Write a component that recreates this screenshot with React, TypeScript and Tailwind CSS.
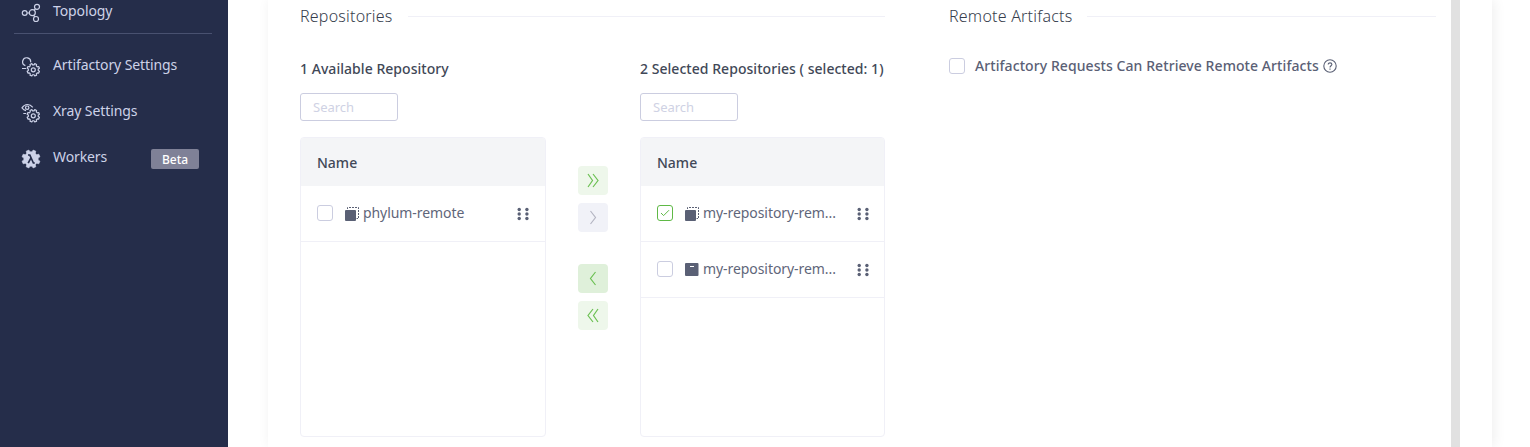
import type { ReactNode } from 'react';

function gearPath(cx: number, cy: number, outer: number, inner: number, teeth: number): string {
  const step = (Math.PI * 2) / teeth;
  const points: string[] = [];
  for (let i = 0; i < teeth; i++) {
    const a = (i + 0.5) * step - Math.PI / 2;
    const corners: [number, number][] = [
      [-0.32, inner],
      [-0.2, outer],
      [0.2, outer],
      [0.32, inner],
    ];
    for (const [offset, r] of corners) {
      const t = a + offset * step;
      points.push(`${(cx + Math.cos(t) * r).toFixed(2)} ${(cy + Math.sin(t) * r).toFixed(2)}`);
    }
  }
  return `M${points.join('L')}Z`;
}

const smallGear = gearPath(12.3, 12.8, 6.3, 5, 8);
const workerGear = gearPath(10, 10, 9.2, 7.2, 8);

function TopologyIcon() {
  return (
    <svg width="20" height="20" viewBox="0 0 20 20" fill="none" stroke="currentColor" strokeWidth="1.2">
      <circle cx="3.7" cy="10" r="2.4" />
      <circle cx="11.3" cy="9.7" r="3" />
      <circle cx="16" cy="3.8" r="2.5" />
      <circle cx="15" cy="16" r="2.5" />
      <path d="M6.2 10h2.2M13.1 7.2l1.3-1.4M12.7 12.3l1 1.5" />
    </svg>
  );
}

function ArtifactoryIcon() {
  return (
    <svg width="20" height="20" viewBox="0 0 20 20" fill="none" stroke="currentColor" strokeWidth="1.2">
      <path d="M4.4 8.6A4 4 0 1 1 9.6 5.4M1 11.5h4" />
      <path d={smallGear} strokeLinejoin="round" />
      <circle cx="12.3" cy="12.8" r="2" />
    </svg>
  );
}

function XrayIcon() {
  return (
    <svg width="20" height="20" viewBox="0 0 20 20" fill="none" stroke="currentColor" strokeWidth="1.2">
      <path d="M5 7.6C3 7 1.8 5.8 1 4.8 4 .4 8.8.6 11.8 4.4M2.3 10.5h2.8" />
      <circle cx="6.2" cy="4.7" r="1.7" />
      <path d={smallGear} strokeLinejoin="round" />
      <circle cx="12.3" cy="12.8" r="2" />
    </svg>
  );
}

function WorkersIcon() {
  return (
    <svg width="20" height="20" viewBox="0 0 20 20">
      <path d={workerGear} fill="currentColor" stroke="currentColor" strokeWidth="0.6" strokeLinejoin="round" />
      <path d="M7 6h1.8l3.6 8h1.4M10 8.8l-2.8 5.4" fill="none" stroke="#252d4a" strokeWidth="1.7" />
    </svg>
  );
}

function NavItem({ icon, label, badge }: { icon: ReactNode; label: string; badge?: string }) {
  return (
    <div className="flex h-[46px] items-center pl-[21px] pr-[29px] text-[#cdd2e8]">
      <span className="mr-3 mt-[3px] block h-5 w-5 shrink-0">{icon}</span>
      <span className="grow text-sm leading-5 tracking-[-0.1px]">{label}</span>
      {badge && (
        <span className="mt-1 flex h-5 w-12 items-center justify-center rounded-[2px] bg-[#7f8197] pt-[2px] text-xs font-medium text-white">
          {badge}
        </span>
      )}
    </div>
  );
}

function Checkbox({ checked = false }: { checked?: boolean }) {
  return (
    <span
      className={`flex h-4 w-4 shrink-0 items-center justify-center rounded-[3px] border bg-white ${
        checked ? 'border-[#5fb946]' : 'border-[#cbcde0]'
      }`}
    >
      {checked && (
        <svg width="10" height="8" viewBox="0 0 10 8" fill="none" stroke="#5fb946" strokeWidth="1">
          <path d="M1 4l2.6 2.6L9 1.2" />
        </svg>
      )}
    </span>
  );
}

function RemoteRepoIcon() {
  return (
    <svg width="14" height="14" viewBox="0 0 14 14" className="block shrink-0">
      <rect x="0" y="3" width="11" height="11" rx="1" fill="#5a6075" />
      <path d="M2.5 2V.5h11v11h-2" fill="none" stroke="#5a6075" strokeDasharray="2 1" />
    </svg>
  );
}

function LocalRepoIcon() {
  return (
    <svg width="14" height="14" viewBox="0 0 14 14" className="block shrink-0">
      <rect x="0" y="0" width="13.5" height="13" rx="1" fill="#5a6075" />
      <path d="M5 3.5h4" stroke="#fff" strokeWidth="1.2" />
    </svg>
  );
}

function DragHandle() {
  return (
    <svg width="13" height="14" viewBox="0 0 13 14" fill="#5a6075" className="block shrink-0">
      {[2.5, 7, 11.5].map((y) => (
        <g key={y}>
          <circle cx="2.2" cy={y} r="1.7" />
          <circle cx="9.9" cy={y} r="1.7" />
        </g>
      ))}
    </svg>
  );
}

type Repo = { name: string; kind: 'remote' | 'local'; checked?: boolean };

function RepoList({
  title,
  width,
  handleInset,
  repos,
}: {
  title: string;
  width: string;
  handleInset: string;
  repos: Repo[];
}) {
  return (
    <div className={`${width} shrink-0`}>
      <div className="h-5 whitespace-nowrap text-sm font-medium leading-5 tracking-[0.04px] text-[#414857]">{title}</div>
      <input
        type="text"
        placeholder="Search"
        className="mt-[14px] block h-7 w-[98px] rounded-[3px] border border-[#cbcde0] px-3 text-[13px] text-[#414857] outline-none placeholder:text-[#cfd2e4]"
      />
      <div className="mt-4 h-[300px] overflow-hidden rounded border border-[#f0f0f7] bg-white">
        <div className="flex h-12 items-center bg-[#f4f5f7] px-4 pt-[2px] text-sm font-medium text-[#414857]">Name</div>
        {repos.map((repo, i) => (
          <div
            key={i}
            className={`flex h-14 items-center border-b border-[#f0f0f7] pb-[2px] pl-4 ${handleInset}`}
          >
            <Checkbox checked={repo.checked} />
            <span className="ml-3 mr-1 mt-[2px]">{repo.kind === 'remote' ? <RemoteRepoIcon /> : <LocalRepoIcon />}</span>
            <span className="whitespace-nowrap text-sm tracking-[-0.07px] text-[#5f667a]">{repo.name}</span>
            <span className="ml-auto mt-[2px]">
              <DragHandle />
            </span>
          </div>
        ))}
      </div>
    </div>
  );
}

function MoveButton({ d, tone }: { d: string; tone: string }) {
  return (
    <button type="button" className={`flex h-[29px] w-[30px] items-center justify-center rounded ${tone}`}>
      <svg width="14" height="15" viewBox="0 0 14 15" fill="none" stroke="currentColor" strokeWidth="1.2">
        <path d={d} />
      </svg>
    </button>
  );
}

function SectionTitle({ children }: { children: ReactNode }) {
  return (
    <div className="flex h-6 items-center">
      <h2 className="whitespace-nowrap text-base font-light leading-6 tracking-[0.22px] text-[#363d4c]">{children}</h2>
      <span className="ml-[15px] h-px grow bg-[#f0f0f7]" />
    </div>
  );
}

function HelpIcon() {
  return (
    <svg width="14" height="14" viewBox="0 0 14 14" fill="none" stroke="#5a6075" strokeWidth="1.1">
      <circle cx="7" cy="7" r="6.2" />
      <path d="M5.2 5.6c0-2.4 3.7-2.2 3.7-.1 0 1.2-1.9 1.4-1.9 2.9M7 9.6v1.2" />
    </svg>
  );
}

export default function App() {
  return (
    <div className="flex h-[447px] w-[1530px] overflow-hidden bg-white font-['Noto_Sans','Open_Sans',sans-serif]">
      <aside className="w-[228px] shrink-0 bg-[#252d4a]">
        <div className="-mt-3">
          <NavItem icon={<TopologyIcon />} label="Topology" />
        </div>
        <div className="ml-[14px] mr-4 mt-[-1px] h-px bg-[#495170]" />
        <div className="mt-2">
          <NavItem icon={<ArtifactoryIcon />} label="Artifactory Settings" />
          <NavItem icon={<XrayIcon />} label="Xray Settings" />
          <NavItem icon={<WorkersIcon />} label="Workers" badge="Beta" />
        </div>
      </aside>

      <main className="flex grow pl-10">
        <div className="flex w-[1224px] shrink-0 bg-white pl-8 shadow-[2px_0_12px_rgba(0,0,0,0.07)]">
          <section className="w-[585px] shrink-0 pt-1">
            <SectionTitle>Repositories</SectionTitle>
            <div className="mt-[31px] flex">
              <RepoList
                title="1 Available Repository"
                width="w-[246px]"
                handleInset="pr-[15px]"
                repos={[{ name: 'phylum-remote', kind: 'remote' }]}
              />
              <div className="flex w-[94px] shrink-0 flex-col items-center gap-2 pt-[107px]">
                <MoveButton d="M2 1l4.5 6.5L2 14M7 1l5 6.5L7 14" tone="bg-[#eef7eb] text-[#6bc052]" />
                <MoveButton d="M4.5 1l5 6.5-5 6.5" tone="bg-[#f1f2f8] text-[#b4b5c2]" />
                <div className="h-4" />
                <MoveButton d="M9.5 1l-5 6.5 5 6.5" tone="bg-[#dff0da] text-[#6bc052]" />
                <MoveButton d="M7 1L2 7.5 7 14M12 1L7.5 7.5 12 14" tone="bg-[#eef7eb] text-[#6bc052]" />
              </div>
              <RepoList
                title="2 Selected Repositories ( selected: 1)"
                width="w-[245px]"
                handleInset="pr-[14px]"
                repos={[
                  { name: 'my-repository-rem...', kind: 'remote', checked: true },
                  { name: 'my-repository-rem...', kind: 'local' },
                ]}
              />
            </div>
          </section>

          <section className="ml-16 w-[487px] shrink-0 pt-1">
            <SectionTitle>Remote Artifacts</SectionTitle>
            <div className="mt-7 flex h-5 items-center">
              <Checkbox />
              <span className="ml-[10px] mr-1 whitespace-nowrap text-sm font-medium tracking-[0.075px] text-[#5a6075]">
                Artifactory Requests Can Retrieve Remote Artifacts
              </span>
              <HelpIcon />
            </div>
          </section>
          <div className="ml-[15px] w-[9px] shrink-0 bg-[#e1e1e1]" />
        </div>
      </main>
    </div>
  );
}
